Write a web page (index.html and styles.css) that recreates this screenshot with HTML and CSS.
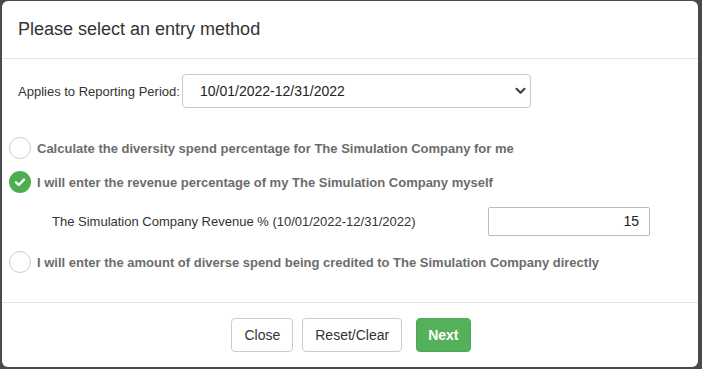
FILE: index.html
```html
<!DOCTYPE html>
<html>
<head>
<meta charset="utf-8">
<link rel="stylesheet" href="styles.css">
</head>
<body>
<div class="modal">
  <div class="modal-header">
    <h4 class="modal-title">Please select an entry method</h4>
  </div>
  <div class="modal-body">
    <div class="period-row">
      <label class="period-label">Applies to Reporting Period:</label>
      <div class="select">
        <span class="select-value">10/01/2022-12/31/2022</span>
        <svg class="chevron" width="11" height="8" viewBox="0 0 11 8"><path d="M1.5 1.8 L5.5 5.8 L9.5 1.8" fill="none" stroke="#444" stroke-width="2.2" stroke-linecap="round" stroke-linejoin="round"/></svg>
      </div>
    </div>
    <div class="options">
      <div class="option first">
        <span class="radio"></span>
        <span class="option-text">Calculate the diversity spend percentage for The Simulation Company for me</span>
      </div>
      <div class="option second">
        <span class="radio checked">
          <svg width="22" height="22" viewBox="0 0 22 22"><path d="M7 11.3 L9.8 14 L15 8.6" fill="none" stroke="#fff" stroke-width="2.4" stroke-linecap="round" stroke-linejoin="round"/></svg>
        </span>
        <span class="option-text">I will enter the revenue percentage of my The Simulation Company myself</span>
      </div>
      <div class="revenue-row">
        <span class="revenue-label">The Simulation Company Revenue % (10/01/2022-12/31/2022)</span>
        <div class="revenue-input">15</div>
      </div>
      <div class="option third">
        <span class="radio"></span>
        <span class="option-text">I will enter the amount of diverse spend being credited to The Simulation Company directly</span>
      </div>
    </div>
  </div>
  <div class="modal-footer">
    <button class="btn">Close</button>
    <button class="btn">Reset/Clear</button>
    <button class="btn btn-success">Next</button>
  </div>
</div>
</body>
</html>
```
FILE: styles.css
```css
*, *::before, *::after {
  box-sizing: border-box;
}
html, body {
  margin: 0;
  padding: 0;
  height: 100%;
}
body {
  background: #4a4a4a;
  font-family: "Liberation Sans", Arial, sans-serif;
  color: #333;
  overflow: hidden;
}
.modal {
  margin: 1px 4px 0 2px;
  height: 366px;
  background: #fff;
  border-radius: 6px;
  display: flex;
  flex-direction: column;
}
.modal-header {
  height: 58px;
  border-bottom: 1px solid #e5e5e5;
  display: flex;
  align-items: center;
  padding: 0 16px;
}
.modal-title {
  margin: 0;
  font-size: 18px;
  font-weight: normal;
  color: #333;
  line-height: 20px;
  padding-bottom: 1px;
}
.modal-body {
  padding: 15px 16px 0 7px;
  height: 244px;
  border-bottom: 1px solid #e5e5e5;
}
.period-row {
  display: flex;
  align-items: center;
  padding-left: 9px;
}
.period-label {
  font-size: 13px;
  color: #333;
  width: 164px;
}
.select {
  width: 349px;
  height: 34px;
  border: 1px solid #c8c8c8;
  border-radius: 4px;
  display: flex;
  align-items: center;
  justify-content: space-between;
  padding: 0 4px 0 17px;
}
.select-value {
  font-size: 14px;
  color: #222;
}
.chevron {
  display: block;
}
.options {
  margin-top: 29px;
}
.option {
  display: flex;
  align-items: center;
  height: 22px;
}
.option.second {
  margin-top: 12px;
}
.option.third {
  margin-top: 15px;
}
.radio {
  width: 22px;
  height: 22px;
  border: 1px solid #cfcfcf;
  border-radius: 50%;
  background: #fff;
  flex: none;
}
.radio.checked {
  border: none;
  background: #4cae4f;
}
.radio.checked svg {
  display: block;
}
.option-text {
  margin-left: 6px;
  font-size: 13px;
  font-weight: bold;
  color: #6c6c6c;
}
.revenue-row {
  display: flex;
  align-items: center;
  justify-content: space-between;
  margin-top: 14px;
  padding-left: 43px;
  padding-right: 32px;
}
.revenue-label {
  font-size: 13px;
  color: #333;
}
.revenue-input {
  width: 162px;
  height: 29px;
  border: 1px solid #bdbdbd;
  border-radius: 2px;
  font-size: 14px;
  color: #222;
  text-align: right;
  line-height: 27px;
  padding-right: 10px;
}
.modal-footer {
  display: flex;
  justify-content: center;
  align-items: flex-start;
  padding-top: 15px;
  padding-left: 2px;
  gap: 9px;
}
.btn {
  font-family: "Liberation Sans", Arial, sans-serif;
  font-size: 14px;
  height: 34px;
  padding: 0 12px;
  border: 1px solid #ccc;
  border-radius: 4px;
  background: #fff;
  color: #333;
}
.btn-success {
  margin-left: 5px;
  padding: 0 11px;
  background: #55b05b;
  border-color: #4ea954;
  color: #fff;
  font-weight: bold;
}
```
